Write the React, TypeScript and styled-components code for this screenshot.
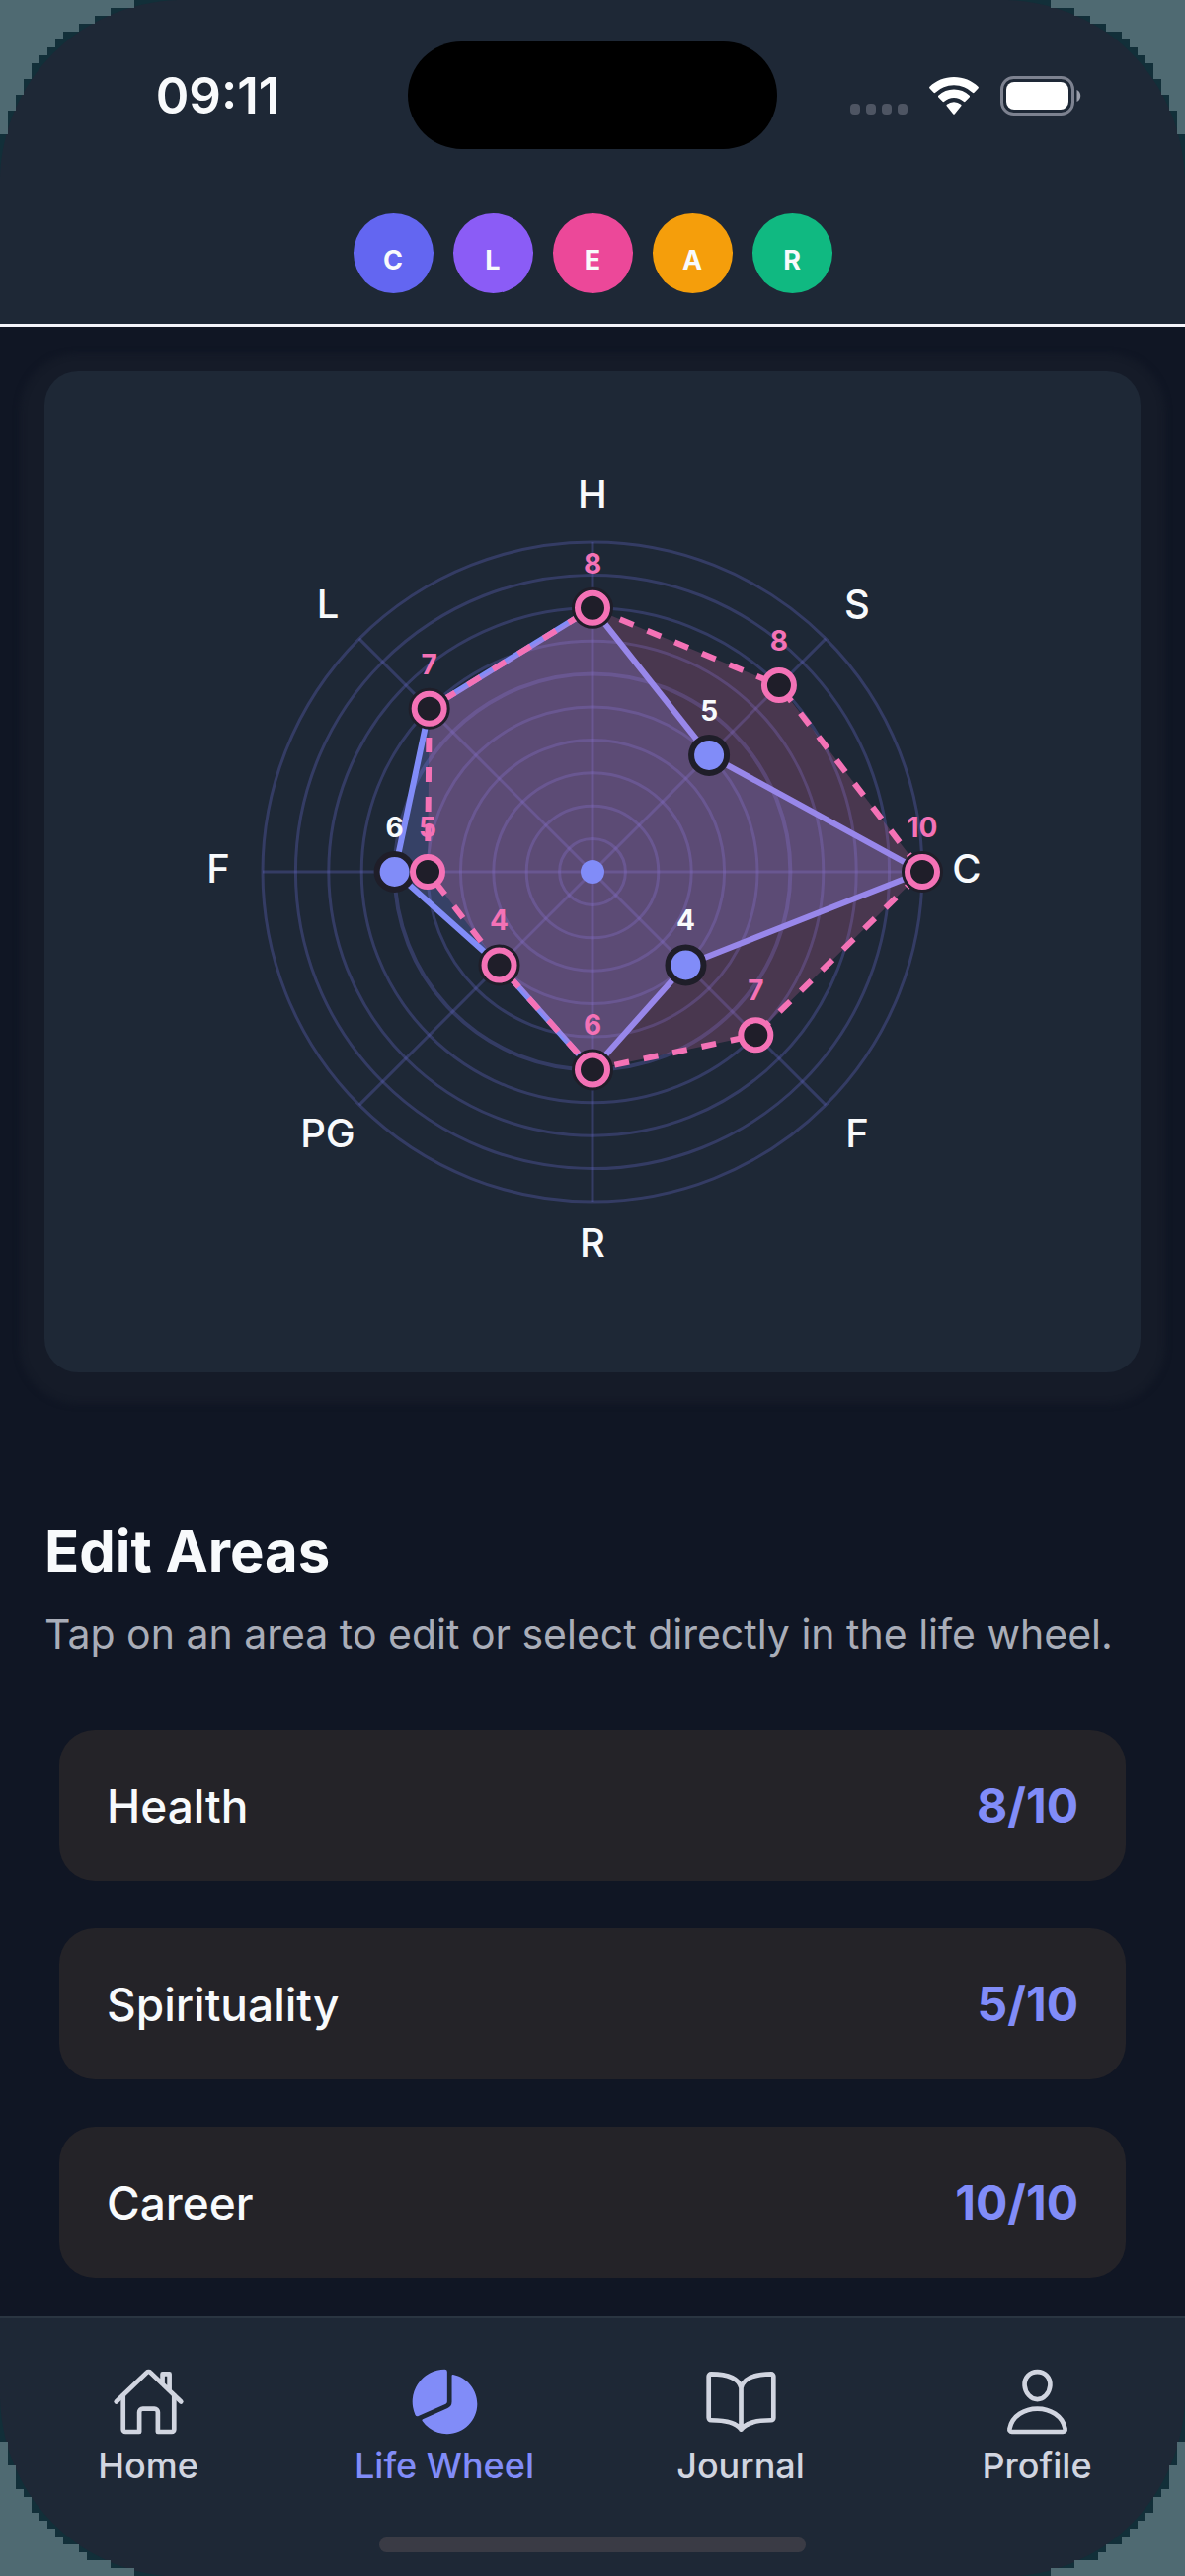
import React from "react";
import styled, { createGlobalStyle } from "styled-components";
import { IoBookOutline, IoHomeOutline, IoPersonOutline, IoPieChart } from "react-icons/io5";

const color = {
  page: "#101624",
  surface: "#1e2836",
  row: "#242328",
  halo: "#151b28",
  text: "#f8fafc",
  muted: "#a9adb8",
  nav: "#d1d5e0",
  accent: "#818cf8",
  goal: "#f472b6",
  ink: "#1f1e29",
};

const GlobalStyle = createGlobalStyle`
  *, *::before, *::after { box-sizing: border-box; }
  body {
    margin: 0;
    background: ${color.page};
    color: ${color.text};
    font-family: Inter, "Liberation Sans", sans-serif;
  }
  button { font: inherit; color: inherit; border: 0; padding: 0; cursor: pointer; }
`;

const Screen = styled.div`
  position: relative;
  display: flex;
  flex-direction: column;
  min-height: 100vh;
  overflow: hidden;
`;

const Header = styled.header`
  background: ${color.surface};
  border-bottom: 3px solid #f4f4fa;
  padding: 42px 0 31px;
`;

const StatusBar = styled.div`
  display: grid;
  grid-template-columns: 1fr 374px 1fr;
  align-items: center;
`;

const Clock = styled.time`
  justify-self: center;
  padding-left: 28px;
  font-size: 51px;
  line-height: 60px;
  font-weight: 600;
`;

const Island = styled.div`
  height: 109px;
  border-radius: 55px;
  background: #000;
`;

const StatusIcons = styled.div`
  display: flex;
  align-items: center;
  justify-content: flex-end;
  gap: 22px;
  padding-right: 105px;
`;

const Steps = styled.nav`
  display: flex;
  justify-content: center;
  gap: 20px;
  margin-top: 65px;
`;

const StepButton = styled.button<{ $fill: string }>`
  width: 81px;
  height: 81px;
  padding-top: 14px;
  border-radius: 50%;
  background: ${(p) => p.$fill};
  font-size: 27px;
  line-height: 32px;
  font-weight: 700;
`;

const Main = styled.main`
  padding: 45px 45px 39px;
`;

const WheelCard = styled.section`
  border-radius: 34px;
  background: ${color.surface};
  box-shadow: 0 7px 6px 25px ${color.halo};
`;

const WheelSvg = styled.svg`
  display: block;
  width: 100%;
  height: auto;
`;

const AxisName = styled.text`
  fill: ${color.text};
  font-size: 40px;
  font-weight: 500;
  text-anchor: middle;
`;

const PointValue = styled.text`
  font-size: 28px;
  font-weight: 700;
  text-anchor: middle;
`;

const Title = styled.h2`
  margin: 146px 0 0;
  font-size: 58px;
  line-height: 70px;
  font-weight: 700;
`;

const Hint = styled.p`
  margin: 25px 0 0;
  color: ${color.muted};
  font-size: 41px;
  line-height: 48px;
`;

const AreaList = styled.ul`
  display: flex;
  flex-direction: column;
  gap: 48px;
  margin: 73px 15px 0;
  padding: 0;
  list-style: none;
`;

const AreaRow = styled.button`
  display: flex;
  align-items: center;
  justify-content: space-between;
  width: 100%;
  height: 153px;
  padding: 0 48px;
  border-radius: 36px;
  background: ${color.row};
  font-size: 46px;
  line-height: 58px;
  font-weight: 500;
`;

const Score = styled.span`
  color: ${color.accent};
  font-size: 48px;
  font-weight: 700;
`;

const TabBar = styled.nav`
  display: flex;
  flex-direction: column;
  align-items: center;
  margin-top: auto;
  padding: 47px 0 25px;
  border-top: 2px solid #2a3541;
  background: ${color.surface};
`;

const Tabs = styled.div`
  display: grid;
  grid-template-columns: repeat(4, 1fr);
  width: 100%;
`;

const Tab = styled.a<{ $active?: boolean }>`
  display: flex;
  flex-direction: column;
  align-items: center;
  gap: 5px;
  color: ${(p) => (p.$active ? color.accent : color.nav)};
  font-size: 36px;
  line-height: 44px;
  font-weight: 500;
  text-decoration: none;
`;

const HomeIndicator = styled.div`
  width: 36%;
  height: 15px;
  margin-top: 51px;
  border-radius: 8px;
  background: #3a3b45;
`;

const CornerArt = styled.svg<{ $bottom?: boolean; $right?: boolean }>`
  position: absolute;
  ${(p) => (p.$bottom ? "bottom: 0;" : "top: 0;")}
  ${(p) => (p.$right ? "right: 0; transform: scaleX(-1);" : "left: 0;")}
  pointer-events: none;
`;

type Band = [width: number, height: number];

const topBands: Band[] = [
  [136, 8], [112, 8], [96, 8], [80, 8], [64, 8], [56, 8],
  [48, 8], [40, 8], [32, 16], [24, 16], [16, 16], [8, 24],
];
const bottomBands: Band[] = [
  [200, 1], [136, 8], [112, 8], [88, 8], [80, 8], [64, 8], [56, 8],
  [48, 8], [40, 8], [32, 16], [24, 8], [16, 24], [8, 24],
];

const cornerPath = (bands: Band[], flip: boolean) => {
  const d = bands.map(([w, h]) => `H${w}v${flip ? -h : h}`).join("");
  return `M0 ${flip ? 200 : 0}${d}H0Z`;
};

function Corner({ bottom, right }: { bottom?: boolean; right?: boolean }) {
  return (
    <CornerArt $bottom={bottom} $right={right} width="200" height="200" viewBox="0 0 200 200" aria-hidden="true">
      <path
        fill="#122f39"
        d={bottom ? "M0 200H180C80 196 4 120 0 20Z" : "M0 0H180C80 4 4 80 0 180Z"}
      />
      <path fill="#4f6a72" d={cornerPath(bottom ? bottomBands : topBands, !!bottom)} />
    </CornerArt>
  );
}

const steps = [
  { letter: "C", fill: "#6366f1" },
  { letter: "L", fill: "#8b5cf6" },
  { letter: "E", fill: "#ec4899" },
  { letter: "A", fill: "#f59e0b" },
  { letter: "R", fill: "#10b981" },
];

const axes = [
  { name: "H", now: 8, goal: 8 },
  { name: "S", now: 5, goal: 8 },
  { name: "C", now: 10, goal: 10 },
  { name: "F", now: 4, goal: 7 },
  { name: "R", now: 6, goal: 6 },
  { name: "PG", now: 4, goal: 4 },
  { name: "F", now: 6, goal: 5 },
  { name: "L", now: 7, goal: 7 },
];

const areas = [
  { name: "Health", score: 8 },
  { name: "Spirituality", score: 5 },
  { name: "Career", score: 10 },
];

const CX = 555;
const CY = 507;
const RADIUS = 334;
const LABEL_RADIUS = 379;

const at = (index: number, radius: number) => {
  const angle = (index * Math.PI) / 4 - Math.PI / 2;
  return { x: CX + radius * Math.cos(angle), y: CY + radius * Math.sin(angle) };
};

const valueAt = (index: number, value: number) => at(index, (value / 10) * RADIUS);

const outline = (values: number[]) =>
  values.map((v, i) => valueAt(i, v)).map((p) => `${p.x},${p.y}`).join(" ");

function LifeWheel() {
  return (
    <WheelSvg viewBox="0 0 1110 1014" role="img" aria-label="Life wheel">
      <g fill="none" stroke="#6366c8" strokeOpacity="0.32">
        {Array.from({ length: 10 }, (_, i) => (
          <circle key={i} cx={CX} cy={CY} r={((i + 1) * RADIUS) / 10} strokeWidth={i === 5 ? 4 : 3} />
        ))}
        {axes.map((_, i) => {
          const end = at(i, RADIUS);
          return <line key={i} x1={CX} y1={CY} x2={end.x} y2={end.y} strokeWidth="3" />;
        })}
      </g>
      <polygon
        points={outline(axes.map((a) => a.now))}
        fill={color.accent}
        fillOpacity="0.25"
        stroke={color.accent}
        strokeWidth="6"
      />
      <polygon
        points={outline(axes.map((a) => a.goal))}
        fill={color.goal}
        fillOpacity="0.2"
        stroke={color.goal}
        strokeWidth="6"
        strokeDasharray="15 15"
      />
      {axes.map((a, i) => {
        const p = valueAt(i, a.now);
        return <circle key={i} cx={p.x} cy={p.y} r="18" fill={color.accent} stroke={color.ink} strokeWidth="6" />;
      })}
      {axes.map((a, i) => {
        const p = valueAt(i, a.goal);
        return <circle key={i} cx={p.x} cy={p.y} r="15" fill={color.ink} stroke={color.goal} strokeWidth="6" />;
      })}
      <circle cx={CX} cy={CY} r="12" fill={color.accent} />
      {axes.map((a, i) => {
        const now = valueAt(i, a.now);
        const goal = valueAt(i, a.goal);
        const label = at(i, LABEL_RADIUS);
        return (
          <g key={i}>
            {a.now !== a.goal && (
              <PointValue x={now.x} y={now.y - 35} fill={color.text}>{a.now}</PointValue>
            )}
            <PointValue x={goal.x} y={goal.y - 35} fill={color.goal}>{a.goal}</PointValue>
            <AxisName x={label.x} y={label.y + 11}>{a.name}</AxisName>
          </g>
        );
      })}
    </WheelSvg>
  );
}

function StatusGlyphs() {
  return (
    <StatusIcons>
      <svg width="58" height="40" viewBox="0 0 58 40" fill="#4e5563" aria-hidden="true">
        {[0, 16, 32, 48].map((x) => (
          <rect key={x} x={x} y="28" width="10" height="11" rx="4" />
        ))}
      </svg>
      <svg width="50" height="38" viewBox="0 0 50 38" fill="#fff" aria-hidden="true">
        <path d="M25 0C15.500 0 6.800 3.700.500 9.700a1.200 1.200 0 0 0 0 1.700l4 4.300a1.200 1.200 0 0 0 1.700 0A27 27 0 0 1 25 8.200a27 27 0 0 1 18.800 7.500 1.200 1.200 0 0 0 1.700 0l4-4.300a1.200 1.200 0 0 0 0-1.700C43.200 3.700 34.500 0 25 0Z" />
        <path d="M25 12.500a23 23 0 0 0-15.700 6.200 1.200 1.200 0 0 0 0 1.700l4.200 4.300a1.200 1.200 0 0 0 1.700 0 14.500 14.500 0 0 1 19.600 0 1.200 1.200 0 0 0 1.700 0l4.200-4.300a1.200 1.200 0 0 0 0-1.700A23 23 0 0 0 25 12.500Z" />
        <path d="M25 25.200a11.500 11.500 0 0 0-7.100 2.500 1.200 1.200 0 0 0 0 1.800l6.200 7.700a1.200 1.200 0 0 0 1.800 0l6.200-7.700a1.200 1.200 0 0 0 0-1.800A11.500 11.500 0 0 0 25 25.200Z" />
      </svg>
      <svg width="82" height="40" viewBox="0 0 82 40" aria-hidden="true">
        <rect x="1.500" y="1.500" width="72" height="37" rx="12" fill="none" stroke="#7d8290" strokeWidth="3" />
        <rect x="6" y="6" width="63" height="28" rx="8" fill="#fff" />
        <path d="M77.500 14c5 2 5 10 0 12Z" fill="#9a9eaa" />
      </svg>
    </StatusIcons>
  );
}

export default function App() {
  return (
    <Screen>
      <GlobalStyle />
      <Header>
        <StatusBar>
          <Clock>09:11</Clock>
          <Island />
          <StatusGlyphs />
        </StatusBar>
        <Steps aria-label="CLEAR steps">
          {steps.map((s) => (
            <StepButton key={s.letter} type="button" $fill={s.fill}>{s.letter}</StepButton>
          ))}
        </Steps>
      </Header>

      <Main>
        <WheelCard>
          <LifeWheel />
        </WheelCard>
        <Title>Edit Areas</Title>
        <Hint>Tap on an area to edit or select directly in the life wheel.</Hint>
        <AreaList>
          {areas.map((a) => (
            <li key={a.name}>
              <AreaRow type="button">
                <span>{a.name}</span>
                <Score>{a.score}/10</Score>
              </AreaRow>
            </li>
          ))}
        </AreaList>
      </Main>

      <TabBar aria-label="Main">
        <Tabs>
          <Tab href="#home"><IoHomeOutline size={75} />Home</Tab>
          <Tab href="#life-wheel" $active aria-current="page"><IoPieChart size={75} />Life Wheel</Tab>
          <Tab href="#journal"><IoBookOutline size={75} />Journal</Tab>
          <Tab href="#profile"><IoPersonOutline size={75} />Profile</Tab>
        </Tabs>
        <HomeIndicator />
      </TabBar>

      <Corner />
      <Corner right />
      <Corner bottom />
      <Corner bottom right />
    </Screen>
  );
}
